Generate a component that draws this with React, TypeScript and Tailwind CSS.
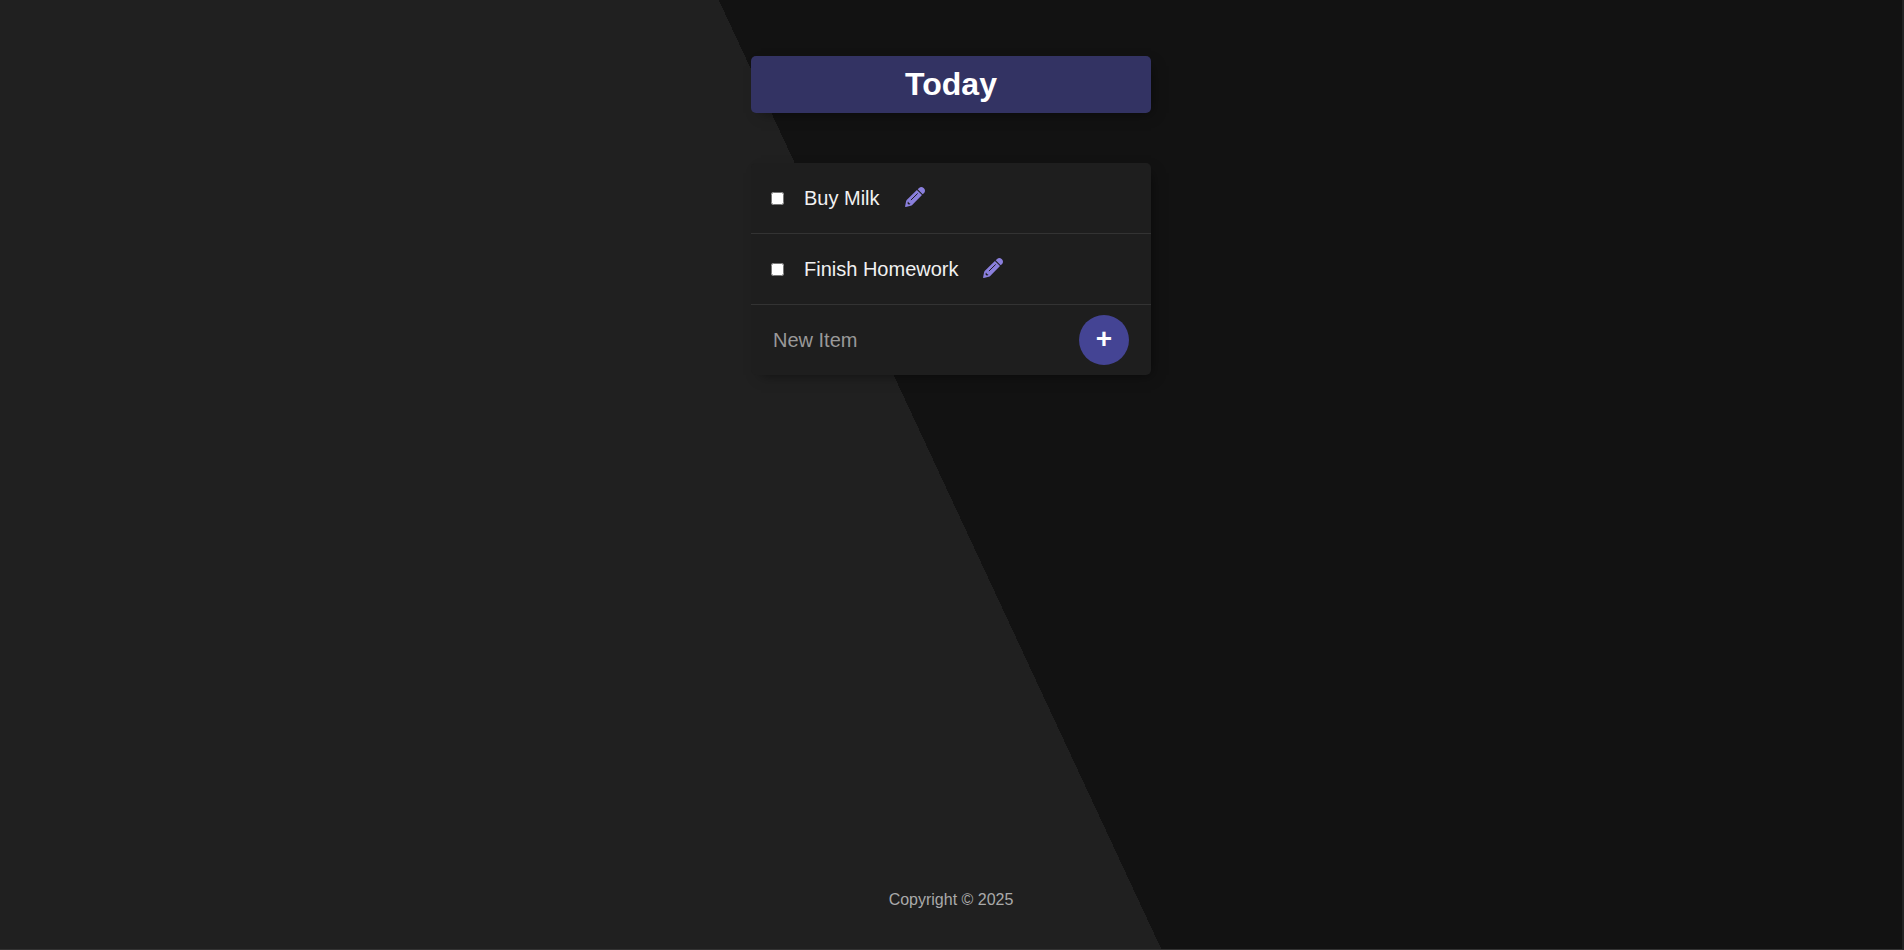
import { useState } from 'react'

type Item = { id: number; title: string }

const initialItems: Item[] = [
  { id: 1, title: 'Buy Milk' },
  { id: 2, title: 'Finish Homework' },
]

function PencilIcon() {
  return (
    <svg viewBox="0 0 20 20" className="size-5" aria-hidden="true">
      <g className="fill-[#8a7fdc]">
        <path d="M12.700 2.300 14.100 .9C15.400-.3 17.300-.3 18.600 1l.5.5c1.200 1.200 1.200 3.100 0 4.400L17.700 7.300Z" />
        <path d="M11.900 3 17 8.100 7.200 18C6.800 18.400 6.300 18.700 5.700 18.800L.8 19.900C.3 20 0 19.700.1 19.200L1.100 14.300C1.200 13.700 1.500 13.200 1.900 12.800Z" />
      </g>
      <path d="M12.400 6.700 6.200 12.800" className="fill-none stroke-[#1e1e1e] stroke-1" strokeLinecap="round" />
      <path d="M3 14.400 4 15.900 5.500 16.800 4.500 17.400 3 17.300 2.500 16Z" className="fill-[#1e1e1e]" />
    </svg>
  )
}

function TodoItem({ item }: { item: Item }) {
  const [done, setDone] = useState(false)

  return (
    <li className="flex min-h-[71px] items-center border-b border-[#333333]">
      <input
        id={`item-${item.id}`}
        type="checkbox"
        checked={done}
        onChange={() => setDone(!done)}
        className="mx-5 size-[13px]"
      />
      <label htmlFor={`item-${item.id}`} className={done ? 'line-through' : ''}>
        {item.title}
      </label>
      <button type="button" aria-label={`Edit ${item.title}`} className="ml-[25px] cursor-pointer pb-0.5">
        <PencilIcon />
      </button>
    </li>
  )
}

export default function App() {
  const [items, setItems] = useState(initialItems)
  const [title, setTitle] = useState('')

  function handleSubmit(e: React.FormEvent) {
    e.preventDefault()
    if (!title.trim()) return
    setItems([...items, { id: Date.now(), title: title.trim() }])
    setTitle('')
  }

  return (
    <div className="flex min-h-screen flex-col items-center border-r-2 border-b border-r-[#222222] border-b-[#333333] bg-[linear-gradient(65deg,#202020_calc(50%-10px),#121212_calc(50%-10px))] px-4 pt-14 pb-[37px] font-['Liberation_Sans',Arial,sans-serif] text-white">
      <main className="w-full max-w-[400px]">
        <h1 className="rounded-[5px] bg-[#333363] p-2.5 text-center text-[32px] leading-[37px] font-bold shadow-[5px_5px_12px_-5px_rgba(0,0,0,0.5)]">
          Today
        </h1>
        <div className="mt-[50px] rounded-[5px] bg-[#1e1e1e] text-xl text-[#f1f1f1] shadow-[5px_5px_12px_-5px_rgba(0,0,0,0.5)]">
          <ul>
            {items.map((item) => (
              <TodoItem key={item.id} item={item} />
            ))}
          </ul>
          <form onSubmit={handleSubmit} className="flex h-[70px] items-center justify-between px-[22px]">
            <input
              type="text"
              value={title}
              onChange={(e) => setTitle(e.target.value)}
              placeholder="New Item"
              aria-label="New Item"
              autoComplete="off"
              className="min-w-0 flex-1 bg-transparent placeholder-[#999999] outline-none"
            />
            <button
              type="submit"
              aria-label="Add item"
              className="size-[50px] shrink-0 cursor-pointer rounded-full bg-[#444494] pb-0.5 text-[28px] leading-none font-bold text-white"
            >
              +
            </button>
          </form>
        </div>
      </main>
      <footer className="mt-auto text-[#aaaaaa]">Copyright © 2025</footer>
    </div>
  )
}
